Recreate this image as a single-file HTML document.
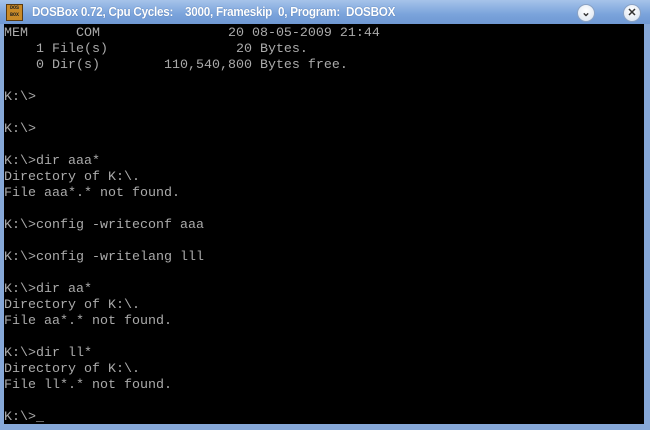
<!DOCTYPE html>
<html><head><style>
html,body{margin:0;padding:0;}
body{width:650px;height:430px;overflow:hidden;background:#7fa4d6;position:relative;font-family:"Liberation Sans",sans-serif;}
#tb{position:absolute;left:0;top:0;width:650px;height:24px;background:linear-gradient(#a6c3ea,#7aa3db 60%,#6f98d3);}
#frame{position:absolute;left:0;top:24px;width:650px;height:406px;background:#86a8d8;}
#ic{position:absolute;left:6px;top:4px;width:15px;height:15px;background:#c98a28;border:1px solid #5a3a10;font:bold 5px/7px "Liberation Mono",monospace;color:#222;text-align:center;}
#title{position:absolute;left:32px;top:4px;color:#fff;font-size:13px;font-weight:bold;letter-spacing:-0.3px;white-space:pre;transform:scaleX(0.9);transform-origin:left;text-shadow:0 0 1px #3a5f95;}
.btn{position:absolute;top:4px;width:16px;height:16px;border-radius:50%;background:radial-gradient(circle at 50% 35%,#fff,#d8e2ef);border:1px solid #8aa2c4;font:bold 11px/16px "Liberation Sans",sans-serif;text-align:center;color:#333;}
#scr{position:absolute;left:4px;top:24px;width:640px;height:398px;padding-top:2px;background:#000;color:#aaa;font-family:"Liberation Mono",monospace;font-size:13.33px;line-height:16px;white-space:pre;}
</style></head><body>
<div id="tb"></div>
<div id="frame"></div>
<div id="ic">DOS<br>BOX</div>
<div id="title">DOSBox 0.72, Cpu Cycles:    3000, Frameskip  0, Program:  DOSBOX</div>
<div class="btn" style="left:577px">&#8964;</div>
<div class="btn" style="left:623px">&#10005;</div>
<div id="scr">MEM      COM                20 08-05-2009 21:44
    1 File(s)                20 Bytes.
    0 Dir(s)        110,540,800 Bytes free.

K:\&gt;

K:\&gt;

K:\&gt;dir aaa*
Directory of K:\.
File aaa*.* not found.

K:\&gt;config -writeconf aaa

K:\&gt;config -writelang lll

K:\&gt;dir aa*
Directory of K:\.
File aa*.* not found.

K:\&gt;dir ll*
Directory of K:\.
File ll*.* not found.

K:\&gt;_</div>
</body></html>
